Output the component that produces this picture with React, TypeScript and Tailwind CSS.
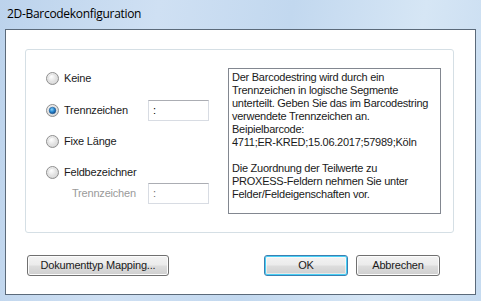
import React from "react";

function Radio({ checked }: { checked?: boolean }) {
  return (
    <svg width="13" height="13" viewBox="0 0 13 13" className="shrink-0">
      <defs>
        <radialGradient id="rbg" cx="0.4" cy="0.35" r="0.7">
          <stop offset="0" stopColor="#ffffff" />
          <stop offset="1" stopColor="#cfcfcf" />
        </radialGradient>
        <radialGradient id="rdot" cx="0.4" cy="0.35" r="0.7">
          <stop offset="0" stopColor="#8ad1f6" />
          <stop offset="0.5" stopColor="#2a8ad4" />
          <stop offset="1" stopColor="#0e3f7a" />
        </radialGradient>
      </defs>
      <circle cx="6.5" cy="6.5" r="6" fill="url(#rbg)" stroke="#8f8f8f" strokeWidth="1" />
      <circle cx="6.5" cy="6.5" r="4.2" fill="none" stroke="#e2e2e2" strokeWidth="1" />
      {checked && <circle cx="6.5" cy="6.5" r="3.3" fill="url(#rdot)" stroke="#1c5a96" strokeWidth="0.6" />}
    </svg>
  );
}

function TextBox({ value, disabled }: { value: string; disabled?: boolean }) {
  return (
    <div
      className={`w-[61px] h-[21px] border border-[#d8dce3] border-t-[#abadb3] bg-white pl-[4px] flex items-center text-[11px] leading-none ${
        disabled ? "text-[#6d6d6d]" : "text-black"
      }`}
    >
      {value}
    </div>
  );
}

function Button({ label, width, isDefault }: { label: string; width: string; isDefault?: boolean }) {
  return (
    <div
      className={`${width} h-[21px] rounded-[3px] border flex items-center justify-center text-[11px] text-[#1a1a1a] tracking-[-0.2px] bg-[linear-gradient(to_bottom,#f3f3f3_0%,#ebebeb_48%,#dddddd_52%,#cfcfcf_100%)] ${
        isDefault
          ? "border-[#3c7fb1] shadow-[inset_0_0_0_1px_#48d0f6,inset_0_0_0_2px_#ffffff80]"
          : "border-[#707070] shadow-[inset_0_0_0_1px_#fcfcfc]"
      }`}
    >
      {label}
    </div>
  );
}

export default function App() {
  return (
    <div
      className="w-[481px] h-[301px] flex flex-col bg-[linear-gradient(100deg,#bcd3ec_0%,#cfe0f3_30%,#c2d8ef_55%,#d6e6f5_80%,#c6dbf0_100%)] overflow-hidden"
      style={{ fontFamily: '"Liberation Sans", Arial, sans-serif' }}
    >
      {/* title bar */}
      <div className="h-[29px] pl-[7px] flex items-center text-[12px] text-black pb-[2px] tracking-[-0.3px]" style={{ fontFamily: '"Open Sans", "Liberation Sans", sans-serif' }}>
        2D-Barcodekonfiguration
      </div>

      {/* client area */}
      <div className="mx-[5px] h-[266px] border border-[#5b6a7a] bg-white flex flex-col pt-[19px] pl-[19px]">
        {/* group box */}
        <div className="w-[429px] h-[184px] border border-[#d5dfe5] rounded-[3px] flex">
          <div className="w-[202px] pl-[20px] pt-[18px] flex flex-col text-[11px] text-[#1a1a1a] tracking-[-0.2px]">
            <div className="h-[20px] flex items-center">
              <Radio />
              <span className="ml-[5px]">Keine</span>
            </div>
            <div className="h-[20px] mt-[12px] flex items-center">
              <Radio checked />
              <span className="ml-[5px] w-[84px]">Trennzeichen</span>
              <TextBox value=":" />
            </div>
            <div className="h-[20px] mt-[11px] flex items-center">
              <Radio />
              <span className="ml-[5px]">Fixe Länge</span>
            </div>
            <div className="h-[20px] mt-[11px] flex items-center">
              <Radio />
              <span className="ml-[5px]">Feldbezeichner</span>
            </div>
            <div className="h-[21px] mt-[1px] flex items-center">
              <span className="ml-[26px] w-[76px] text-[#9a9a9a]">Trennzeichen</span>
              <TextBox value=":" disabled />
            </div>
          </div>

          <div className="mt-[18px] w-[213px] h-[146px] border border-[#828790] px-[3px] pt-[2px] text-[11px] leading-[13px] text-[#1a1a1a] tracking-[-0.25px] whitespace-nowrap overflow-hidden">
            <p>
              Der Barcodestring wird durch ein
              <br />
              Trennzeichen in logische Segmente
              <br />
              unterteilt. Geben Sie das im Barcodestring
              <br />
              verwendete Trennzeichen an.
              <br />
              Beipielbarcode:
              <br />
              4711;ER-KRED;15.06.2017;57989;Köln
            </p>
            <p className="mt-[13px]">
              Die Zuordnung der Teilwerte zu
              <br />
              PROXESS-Feldern nehmen Sie unter
              <br />
              Felder/Feldeigenschaften vor.
            </p>
          </div>
        </div>

        {/* buttons */}
        <div className="mt-[22px] flex items-center pl-[2px] pr-[35px]">
          <Button label="Dokumenttyp Mapping..." width="w-[142px]" />
          <div className="flex-1" />
          <Button label="OK" width="w-[84px]" isDefault />
          <div className="w-[8px]" />
          <Button label="Abbrechen" width="w-[84px]" />
        </div>
      </div>
    </div>
  );
}
